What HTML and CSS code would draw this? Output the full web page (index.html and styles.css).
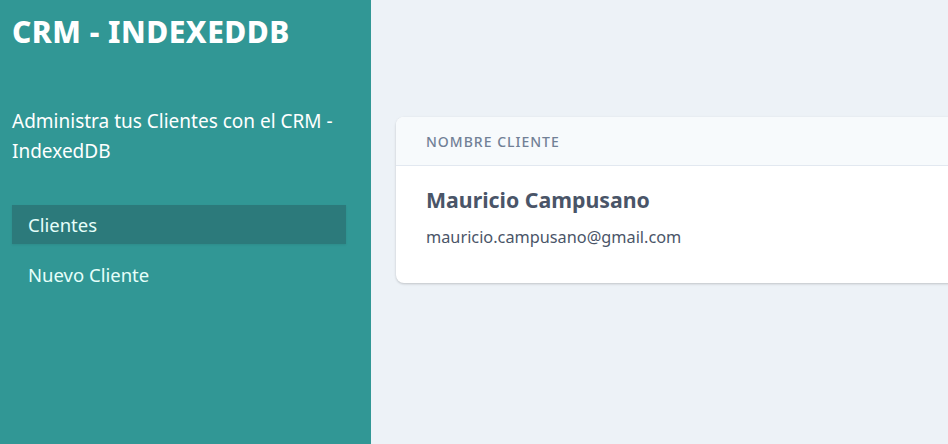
FILE: index.html
```html
<!DOCTYPE html>
<html lang="es">
<head>
<meta charset="utf-8">
<title>CRM - IndexedDB</title>
<link rel="stylesheet" href="styles.css">
</head>
<body>
<div class="layout">
  <aside class="sidebar">
    <h1 class="brand">CRM - INDEXEDDB</h1>
    <p class="tagline">Administra tus Clientes con el CRM - IndexedDB</p>
    <nav class="nav">
      <a class="nav-link active" href="#">Clientes</a>
      <a class="nav-link" href="#">Nuevo Cliente</a>
    </nav>
  </aside>
  <main class="main">
    <div class="card">
      <div class="card-head">Nombre Cliente</div>
      <div class="card-row">
        <p class="client-name">Mauricio Campusano</p>
        <p class="client-email">mauricio.campusano@gmail.com</p>
      </div>
    </div>
  </main>
</div>
</body>
</html>
```
FILE: styles.css
```css
* { box-sizing: border-box; }
html, body { margin: 0; height: 100%; overflow: hidden; }
body {
  font-family: "Noto Sans", "Open Sans", sans-serif;
  background: #edf2f7;
}
.layout {
  display: flex;
  height: 444px;
}
.sidebar {
  width: 371px;
  flex-shrink: 0;
  background: #319795;
  padding: 14px 12px 12px 12px;
}
.brand {
  margin: 0;
  color: #fff;
  font-size: 30px;
  line-height: 36px;
  font-weight: 800;
  letter-spacing: 0.5px;
}
.tagline {
  margin: 56px 0 0;
  color: #fff;
  font-size: 19px;
  line-height: 30px;
}
.nav {
  display: flex;
  flex-direction: column;
  gap: 10.5px;
  margin: 39px 13px 0 0;
}
.nav-link {
  display: block;
  height: 39px;
  line-height: 39px;
  padding: 0 16px;
  color: #e6fffa;
  font-size: 18.5px;
  text-decoration: none;
}
.nav-link.active {
  background: #2c7a7b;
  box-shadow: 0 1px 2px rgba(0,0,0,0.08);
}
.main {
  flex: 1;
  min-width: 0;
  padding: 117px 0 0 25px;
  overflow: hidden;
}
.card {
  width: 700px;
  background: #fff;
  border-radius: 8px;
  box-shadow: 0 1px 3px rgba(0,0,0,0.12), 0 1px 2px rgba(0,0,0,0.08);
  overflow: hidden;
}
.card-head {
  height: 49px;
  line-height: 49px;
  padding: 0 30px;
  background: #f7fafc;
  border-bottom: 1px solid #e2e8f0;
  color: #718096;
  font-size: 14px;
  font-weight: 500;
  text-transform: uppercase;
  letter-spacing: 1px;
}
.card-row {
  height: 117px;
  padding: 20px 30px 0;
  color: #4a5568;
}
.client-name {
  margin: 0;
  font-size: 21.3px;
  line-height: 28px;
  font-weight: 700;
}
.client-email {
  margin: 11px 0 0;
  font-size: 16.3px;
  line-height: 24px;
}
```
